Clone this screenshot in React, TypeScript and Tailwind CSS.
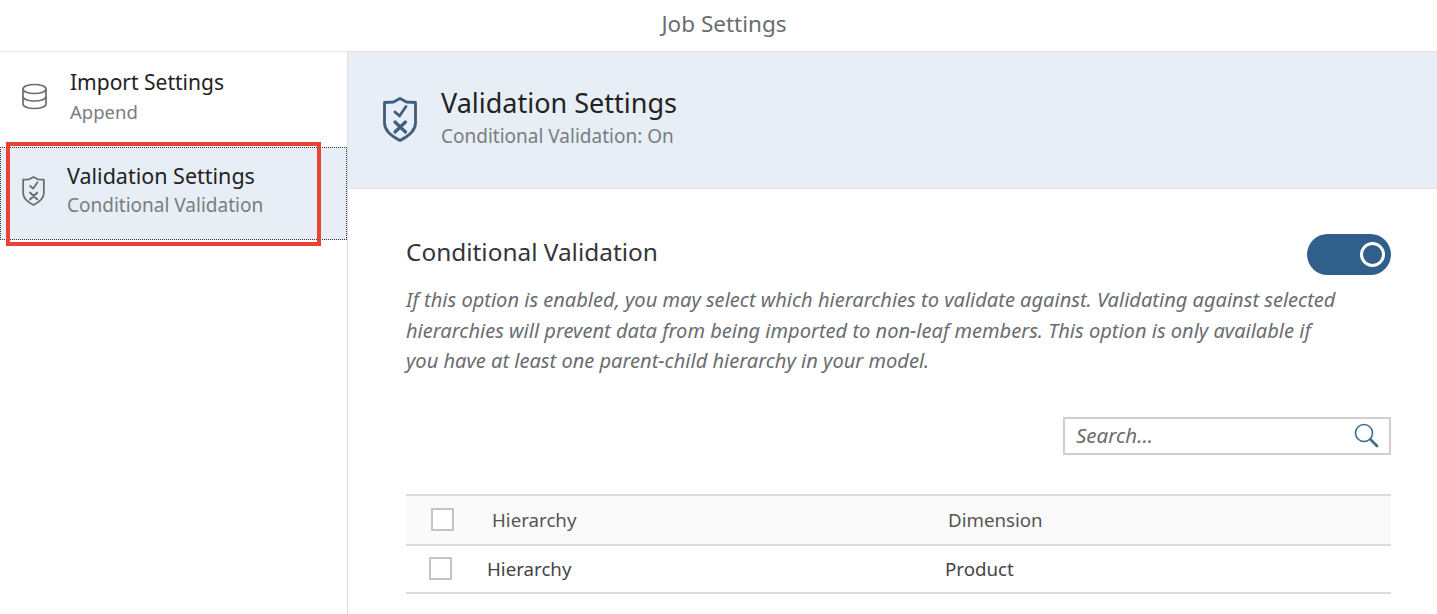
function DbIcon() {
  return (
    <svg width="27" height="27" viewBox="0 0 27 27" fill="none" stroke="#6a6d70" strokeWidth="1.7">
      <ellipse cx="13.500" cy="6" rx="11.500" ry="4.500" />
      <path d="M2 6v15c0 2.500 5 4.500 11.500 4.500S25 23.500 25 21V6" />
      <path d="M2 13.500c0 2.500 5 4.500 11.500 4.500S25 16 25 13.500" />
    </svg>
  );
}

function ShieldIcon({ w, h, color, width }: { w: number; h: number; color: string; width: number }) {
  return (
    <svg width={w} height={h} viewBox="0 0 34 45" fill="none" stroke={color} strokeWidth={width}>
      <path d="M17 1.500 L23.500 5 L32.500 5.500 V26 C32.500 34 25 39.500 17 43.500 C9 39.500 1.500 34 1.500 26 V5.500 L10.500 5 Z" strokeLinejoin="round" />
      <path d="M12 15 L16.500 19 L23 9.500" strokeLinecap="round" strokeLinejoin="round" />
      <path d="M12 25 L22.500 35 M22.500 25 L12 35" strokeWidth={width * 1.15} strokeLinecap="round" />
    </svg>
  );
}

function SearchIcon() {
  return (
    <svg width="25" height="25" viewBox="0 0 25 25" fill="none" stroke="#3f6c94">
      <circle cx="10" cy="10" r="8.500" strokeWidth="1.600" />
      <path d="M16.500 16.500 L23 23" strokeWidth="2.800" strokeLinecap="round" />
    </svg>
  );
}

function Checkbox() {
  return <div className="w-[23px] h-[23px] border-2 border-[#c4c4c4] bg-white shrink-0" />;
}

export default function App() {
  return (
    <div className="h-[614px] w-[1437px] overflow-hidden bg-white flex flex-col font-['Noto_Sans',sans-serif] text-[#32363a]">
      {/* Header */}
      <header className="h-[52px] shrink-0 flex items-center justify-center pl-[11px] pb-[3px] border-b border-[#e5e5e5] text-[22.500px] text-[#6a6d70]">
        Job Settings
      </header>

      <div className="flex flex-1 min-h-0">
        {/* Sidebar */}
        <aside className="relative w-[348px] shrink-0 border-r border-[#dedede] pt-px">
          <div className="h-[94px] flex items-center pl-[21px] pb-[7px] gap-[22px]">
            <DbIcon />
            <div className="flex flex-col">
              <span className="text-[21px] leading-[29px] text-[#222]">Import Settings</span>
              <span className="text-[18.500px] leading-[29px] text-[#7a7d80]">Append</span>
            </div>
          </div>
          <div className="h-[93px] flex items-center pl-[20px] pb-[6px] gap-[21px] bg-[#e7eef6] border border-dotted border-[#333]">
            <ShieldIcon w={25} h={30} color="#6a6d70" width={2.600} />
            <div className="flex flex-col">
              <span className="text-[21.500px] leading-[29px] text-[#222]">Validation Settings</span>
              <span className="text-[19px] leading-[30px] text-[#7a7d80]">Conditional Validation</span>
            </div>
          </div>
          {/* red annotation */}
          <div className="absolute left-[6px] top-[90px] w-[315px] h-[104px] border-[4px] border-[#ea4335]" />
        </aside>

        {/* Main */}
        <main className="flex-1 min-w-0">
          <div className="h-[137px] bg-[#e7eef6] border-b border-[#e5e5e5] flex items-center pl-[35px] pb-[6px] gap-[24px]">
            <div className="mt-[4px]">
              <ShieldIcon w={34} h={45} color="#3f5f7d" width={2.800} />
            </div>
            <div className="flex flex-col">
              <span className="text-[27px] leading-[38px] text-[#222]">Validation Settings</span>
              <span className="text-[19px] leading-[28px] text-[#7a7d80]">Conditional Validation: On</span>
            </div>
          </div>

          <div className="pl-[58px] pr-[46px]">
            <div className="flex items-center justify-between mt-[45px] h-[40px]">
              <span className="mb-[4px] text-[24.400px] text-[#32363a]">Conditional Validation</span>
              <div className="w-[84px] h-[41px] rounded-full bg-[#2f5f8a] flex items-center justify-end pr-[6px]">
                <div className="w-[25px] h-[25px] rounded-full border-[3px] border-white" />
              </div>
            </div>

            <p className="mt-[11px] w-[940px] text-[20.060px] leading-[30.500px] italic text-[#6a6d70]">
              If this option is enabled, you may select which hierarchies to validate against. Validating against selected hierarchies will prevent data from being imported to non-leaf members. This option is only available if you have at least one parent-child hierarchy in your model.
            </p>

            <div className="flex justify-end mt-[40px]">
              <div className="w-[328px] h-[38px] border-2 border-[#cfcfcf] flex items-center justify-between pl-[11px] pr-[10px]">
                <span className="text-[20.500px] italic text-[#6a6d70]">Search...</span>
                <SearchIcon />
              </div>
            </div>

            <div className="mt-[39px] h-[52px] border-y-2 border-[#dcdcdc] bg-[#fafafa] flex items-center text-[18.700px] text-[#555]">
              <div className="w-[86px] pl-[25px]"><Checkbox /></div>
              <span className="w-[456px] pt-px">Hierarchy</span>
              <span className="pt-px">Dimension</span>
            </div>
            <div className="h-[48px] border-b-2 border-[#dcdcdc] flex items-center text-[18.700px] text-[#444]">
              <div className="w-[81px] pl-[23px]"><Checkbox /></div>
              <span className="w-[458px] pt-px">Hierarchy</span>
              <span className="pt-px">Product</span>
            </div>
          </div>
        </main>
      </div>
    </div>
  );
}
